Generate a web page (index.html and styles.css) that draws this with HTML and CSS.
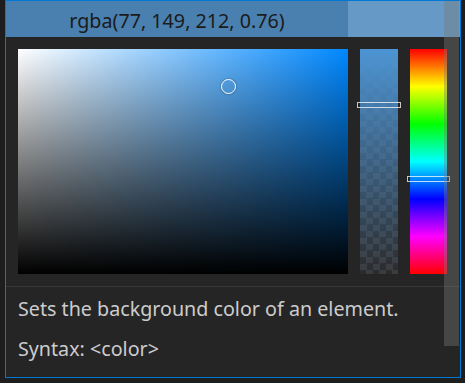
FILE: index.html
```html
<!DOCTYPE html>
<html lang="en">
<head>
    <meta charset="UTF-8">
    <meta name="viewport" content="width=device-width, initial-scale=1.0">
    <title>Color Picker</title>
    <link rel="stylesheet" href="styles.css">
</head>
<body>
    <div class="widget">
        <div class="header">
            <div class="picked">rgba(77, 149, 212, 0.76)</div>
            <div class="original"></div>
        </div>

        <div class="picker">
            <div class="saturation">
                <div class="white"></div>
                <div class="black"></div>
                <div class="dot"></div>
            </div>
            <div class="strip opacity">
                <div class="fill"></div>
                <div class="slider op-slider"></div>
            </div>
            <div class="strip hue">
                <div class="slider hue-slider"></div>
            </div>
        </div>

        <div class="hover-text">
            <p>Sets the background color of an element.</p>
            <p>Syntax: &lt;color&gt;</p>
        </div>

        <div class="scrollbar"></div>
    </div>
</body>
</html>
```

FILE: styles.css
```css
body{
    margin: 0;
    background-color: #1e1e1e;
    font-family: "Noto Sans", "Open Sans", sans-serif;
}

.widget{
    position: relative;
    margin-left: 5px;
    width: 454px;
    height: 376px;
    border: 1px solid #0078d4;
    background-color: #252526;
}

.header{
    display: flex;
    height: 36px;
}
.picked{
    flex: 1;
    background-color: #4a80b0;
    color: #1b1b1b;
    font-size: 19.7px;
    line-height: 40px;
    text-align: center;
}
.original{
    width: 112px;
    background-color: #6699c5;
}

.picker{
    display: flex;
    gap: 12px;
    padding: 12px 13px 12px 12px;
    border-bottom: 1px solid #383838;
}

.saturation{
    position: relative;
    width: 330px;
    height: 225px;
    background-color: rgb(0, 136, 255);
}
.white{
    position: absolute;
    inset: 0;
    background: linear-gradient(to right, #fff, rgba(255, 255, 255, 0));
}
.black{
    position: absolute;
    inset: 0;
    background: linear-gradient(to bottom, rgba(0, 0, 0, 0), #000);
}
.dot{
    position: absolute;
    left: 203px;
    top: 30px;
    width: 13px;
    height: 13px;
    border: 1px solid #fff;
    border-radius: 50%;
    box-shadow: 0 0 2px rgba(0, 0, 0, .5);
}

.strip{
    position: relative;
    height: 225px;
}
.opacity{
    width: 38px;
    background-color: #2b2b2c;
    background-image:
        conic-gradient(#3a3b3e 25%, transparent 0 50%, #3a3b3e 0 75%, transparent 0);
    background-size: 13px 13px;
}
.fill{
    height: 100%;
    background: linear-gradient(to bottom, rgb(77, 149, 212), rgba(77, 149, 212, 0));
}
.hue{
    width: 37px;
    background: linear-gradient(to bottom, #f00, #ff0 16.7%, #0f0 33.3%, #0ff 50%, #00f 66.7%, #f0f 83.3%, #f00);
}

.slider{
    position: absolute;
    left: -3px;
    right: -3px;
    height: 4px;
    border: 1px solid rgba(255, 255, 255, .75);
}
.op-slider{
    top: 53px;
}
.hue-slider{
    top: 127px;
}

.hover-text{
    padding: 10px 12px;
    color: #cccccc;
    font-size: 19.7px;
    line-height: 24px;
}
.hover-text p{
    margin: 0 0 16px;
}

.scrollbar{
    position: absolute;
    top: 0;
    right: 1px;
    width: 15px;
    height: 345px;
    background-color: rgba(121, 121, 121, .4);
}
```
